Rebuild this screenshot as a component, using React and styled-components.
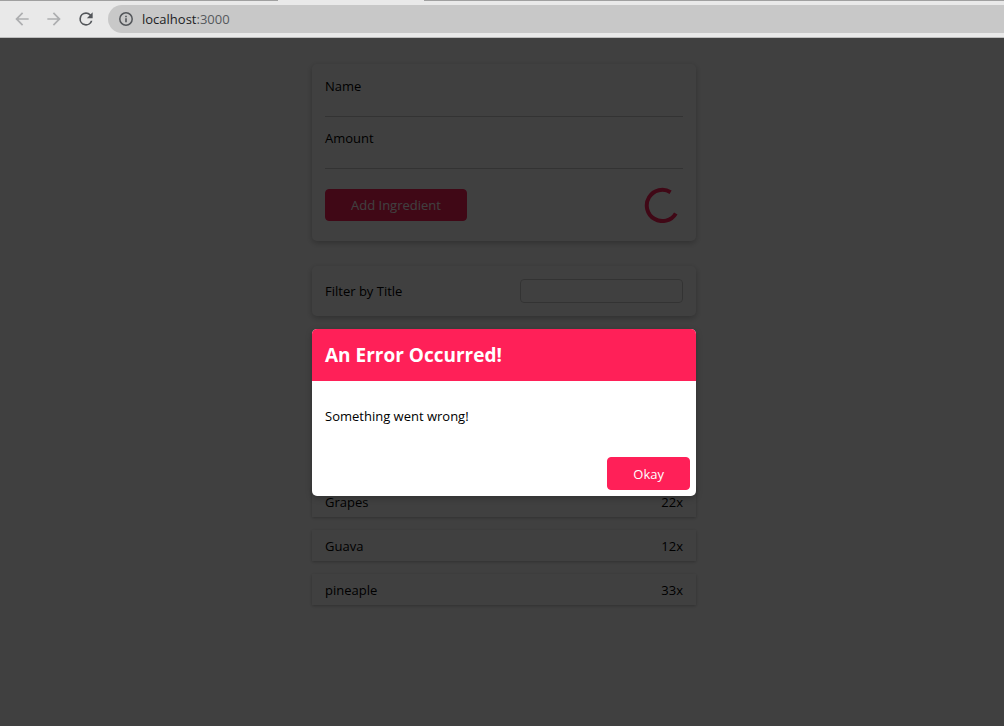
import React from "react";
import styled, { createGlobalStyle } from "styled-components";

const GlobalStyle = createGlobalStyle`
  *, *::before, *::after { box-sizing: border-box; }
  html, body, #root { height: 100%; }
  body {
    margin: 0;
    background: #fff;
    color: #000;
    font: 400 13px/18px "Open Sans", sans-serif;
  }
  button, input { font: inherit; }
`;

const Window = styled.div`
  min-height: 100%;
  display: flex;
  flex-direction: column;
`;

const TabStrip = styled.div`
  height: 1px;
  display: flex;
  background: #e9e9e9;
`;

const TabGap = styled.div`
  flex: ${(p) => (p.$grow ? "1" : "none")};
  width: ${(p) => p.$width || "auto"};
  background: ${(p) => (p.$active ? "#e9e9e9" : "#a0a0a0")};
`;

const Toolbar = styled.header`
  height: 37px;
  display: flex;
  align-items: center;
  padding-left: 12px;
  background: #e9e9e9;
  border-bottom: 1px solid #bdbdbd;
`;

const NavButton = styled.button`
  width: 20px;
  height: 20px;
  margin-right: 12px;
  padding: 0;
  border: 0;
  background: none;
  color: ${(p) => (p.disabled ? "#adaeb0" : "#53565a")};
  svg { display: block; }
`;

const AddressBar = styled.div`
  flex: 1;
  height: 28px;
  display: flex;
  align-items: center;
  gap: 8px;
  padding-left: 10px;
  border-radius: 14px 0 0 14px;
  background: #c8c8c8;
  color: #53565a;
`;

const Url = styled.span`
  color: #55585c;
  b { font-weight: 400; color: #1c1d1f; }
`;

const Page = styled.div`
  flex: 1;
  position: relative;
  padding: 26px 0 26px 4px;
`;

const Column = styled.main`
  width: 100%;
  max-width: 384px;
  margin: 0 auto;
`;

const Card = styled.section`
  margin-bottom: 25px;
  padding: 13px;
  border-radius: 5px;
  background: #fff;
  box-shadow: 0 2px 6px rgba(0, 0, 0, 0.26);
`;

const Field = styled.div`
  display: flex;
  flex-direction: column;
  & + & { margin-top: 12px; }
`;

const LineInput = styled.input`
  width: 100%;
  height: 22px;
  padding: 0 2px;
  border: 0;
  border-bottom: 1px solid #ccc;
  background: none;
  outline: 0;
`;

const FormActions = styled.div`
  display: flex;
  align-items: center;
  justify-content: space-between;
  padding: 18px 0 5px;
`;

const Button = styled.button`
  height: ${(p) => (p.$tall ? "33px" : "32px")};
  padding: 0 25px;
  border: 1px solid #ff2058;
  border-radius: 4px;
  background: #ff2058;
  color: #fff;
`;

const Spinner = styled.svg`
  display: block;
`;

const FilterRow = styled.div`
  display: flex;
  align-items: center;
  justify-content: space-between;
`;

const FilterInput = styled.input`
  width: 163px;
  height: 24px;
  padding: 0 4px;
  border: 1px solid #ccc;
  border-radius: 4px;
  background: #fff;
  outline: 0;
`;

const Ingredients = styled.ul`
  margin: 170px 0 0;
  padding: 0;
  list-style: none;
`;

const Ingredient = styled.li`
  height: 31px;
  display: flex;
  align-items: center;
  justify-content: space-between;
  margin-bottom: 13px;
  padding: 0 13px;
  box-shadow: 0 1px 3px rgba(0, 0, 0, 0.26);
`;

const Backdrop = styled.div`
  position: absolute;
  inset: 0;
  background: rgba(0, 0, 0, 0.75);
`;

const Modal = styled.div`
  position: absolute;
  top: 291px;
  left: 4px;
  right: 0;
  max-width: 384px;
  margin: 0 auto;
  border-radius: 5px;
  overflow: hidden;
  background: #fff;
  box-shadow: 0 2px 6px rgba(0, 0, 0, 0.26);
`;

const ModalTitle = styled.h2`
  margin: 0;
  padding: 13px;
  background: #ff2058;
  color: #fff;
  font-size: 19px;
  line-height: 26px;
`;

const ModalText = styled.p`
  margin: 26px 13px 32px;
`;

const ModalActions = styled.div`
  display: flex;
  justify-content: flex-end;
  padding: 0 6px 6px;
`;

const items = [
  { name: "Grapes", amount: 22 },
  { name: "Guava", amount: 12 },
  { name: "pineaple", amount: 33 },
];

const Glyph = ({ d }) => (
  <svg width="20" height="20" viewBox="0 0 24 24" fill="currentColor" aria-hidden="true">
    <path d={d} />
  </svg>
);

export default function App() {
  return (
    <Window>
      <GlobalStyle />
      <TabStrip>
        <TabGap $width="278px" />
        <TabGap $width="146px" $active />
        <TabGap $grow />
      </TabStrip>
      <Toolbar>
        <NavButton disabled aria-label="Back">
          <Glyph d="M20 11H7.83l5.59-5.59L12 4l-8 8 8 8 1.41-1.41L7.83 13H20v-2z" />
        </NavButton>
        <NavButton disabled aria-label="Forward">
          <Glyph d="M12 4l-1.41 1.41L16.17 11H4v2h12.17l-5.58 5.59L12 20l8-8z" />
        </NavButton>
        <NavButton aria-label="Reload">
          <Glyph d="M17.65 6.35A7.96 7.96 0 0 0 12 4a8 8 0 1 0 7.73 10h-2.08A6 6 0 1 1 12 6c1.66 0 3.14.69 4.22 1.78L13 11h7V4l-2.35 2.35z" />
        </NavButton>
        <AddressBar>
          <svg width="16" height="16" viewBox="0 0 16 16" aria-hidden="true">
            <circle cx="8" cy="8" r="6.2" fill="none" stroke="currentColor" strokeWidth="1.5" />
            <path d="M7.2 7.2h1.6v4H7.2zM7.2 4.7h1.6v1.6H7.2z" fill="currentColor" />
          </svg>
          <Url><b>localhost</b>:3000</Url>
        </AddressBar>
      </Toolbar>
      <Page>
        <Column>
          <Card as="form">
            <Field>
              <label htmlFor="name">Name</label>
              <LineInput id="name" type="text" />
            </Field>
            <Field>
              <label htmlFor="amount">Amount</label>
              <LineInput id="amount" type="text" />
            </Field>
            <FormActions>
              <Button type="submit">Add Ingredient</Button>
              <Spinner width="42" height="36" viewBox="0 0 42 36" role="img" aria-label="Loading">
                <path
                  d="M29.6 5.2A15.6 15.6 0 1 0 34.8 26.4"
                  fill="none"
                  stroke="#ff2058"
                  strokeWidth="4"
                />
              </Spinner>
            </FormActions>
          </Card>
          <Card>
            <FilterRow>
              <label htmlFor="filter">Filter by Title</label>
              <FilterInput id="filter" type="text" />
            </FilterRow>
          </Card>
          <Ingredients>
            {items.map((item) => (
              <Ingredient key={item.name}>
                <span>{item.name}</span>
                <span>{item.amount}x</span>
              </Ingredient>
            ))}
          </Ingredients>
        </Column>
        <Backdrop />
        <Modal role="dialog" aria-labelledby="modal-title">
          <ModalTitle id="modal-title">An Error Occurred!</ModalTitle>
          <ModalText>Something went wrong!</ModalText>
          <ModalActions>
            <Button type="button" $tall>Okay</Button>
          </ModalActions>
        </Modal>
      </Page>
    </Window>
  );
}
